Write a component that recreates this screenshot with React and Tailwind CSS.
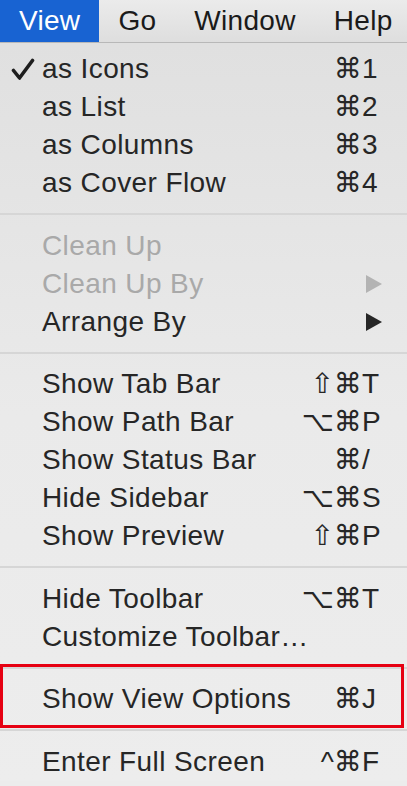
import React from "react";

const FONT = { fontFamily: '"Liberation Sans", "DejaVu Sans", Arial, sans-serif' };

function Check() {
  return (
    <svg width="24" height="24" viewBox="0 0 24 24" className="absolute left-[11px] top-[8px]">
      <path d="M2.5 12.5 L8.5 20 L21.5 2.5" fill="none" stroke="#1e1e1e" strokeWidth="3.6" strokeLinecap="round" strokeLinejoin="round" />
    </svg>
  );
}

function Arrow({ disabled }) {
  return (
    <svg width="17" height="18" viewBox="0 0 17 18" className="ml-[4px]">
      <polygon points="0,0 16,9 0,18" fill={disabled ? "#b3b3b3" : "#262626"} />
    </svg>
  );
}

function Item({ label, mods = "", keyChar = "", disabled, checked, submenu }) {
  return (
    <div
      className={
        "relative flex items-center h-[38px] pl-[42px] pr-[23px] text-[28px] leading-[38px] " +
        (disabled ? "text-[#a9a9a9]" : "text-[#262626]")
      }
    >
      {checked && <Check />}
      <span className="flex-1 whitespace-nowrap tracking-[0.4px]">{label}</span>
      <span className="text-right whitespace-nowrap">{mods}</span>
      <span className="w-[22px] flex items-center whitespace-nowrap">
        {submenu ? <Arrow disabled={disabled} /> : keyChar}
      </span>
    </div>
  );
}

function Sep() {
  return (
    <div className="h-[24.5px] flex items-center">
      <div className="h-[2px] w-full bg-[#d6d6d6]" />
    </div>
  );
}

export default function App() {
  return (
    <div className="w-[407px] h-[786px] overflow-hidden bg-[#ececec]" style={FONT}>
      <div className="flex h-[43px] bg-gradient-to-b from-[#ebebeb] to-[#dedede] border-b border-[#b8b8b8] text-[28px] text-[#1a1a1a] tracking-[0.3px]">
        <div className="h-full flex items-center px-[19px] bg-[#1863d2] text-white">View</div>
        <div className="h-full flex items-center px-[19px]">Go</div>
        <div className="h-full flex items-center px-[19px]">Window</div>
        <div className="h-full flex items-center px-[19px]">Help</div>
      </div>
      <div className="pt-[7px] bg-gradient-to-b from-[#e0e0e0] via-[#eaeaea] to-[#ededed]">
        <Item label="as Icons" mods="⌘" keyChar="1" checked />
        <Item label="as List" mods="⌘" keyChar="2" />
        <Item label="as Columns" mods="⌘" keyChar="3" />
        <Item label="as Cover Flow" mods="⌘" keyChar="4" />
        <Sep />
        <Item label="Clean Up" disabled />
        <Item label="Clean Up By" disabled submenu />
        <Item label="Arrange By" submenu />
        <Sep />
        <Item label="Show Tab Bar" mods="⇧⌘" keyChar="T" />
        <Item label="Show Path Bar" mods="⌥⌘" keyChar="P" />
        <Item label="Show Status Bar" mods="⌘" keyChar="/" />
        <Item label="Hide Sidebar" mods="⌥⌘" keyChar="S" />
        <Item label="Show Preview" mods="⇧⌘" keyChar="P" />
        <Sep />
        <Item label="Hide Toolbar" mods="⌥⌘" keyChar="T" />
        <Item label="Customize Toolbar…" />
        <Sep />
        <div className="relative">
          <Item label="Show View Options" mods="⌘" keyChar="J" />
          <div className="absolute left-0 right-[3px] top-[-16px] bottom-[-10px] border-[3px] border-[#e60012]" />
        </div>
        <Sep />
        <Item label="Enter Full Screen" mods="^⌘" keyChar="F" />
      </div>
    </div>
  );
}
